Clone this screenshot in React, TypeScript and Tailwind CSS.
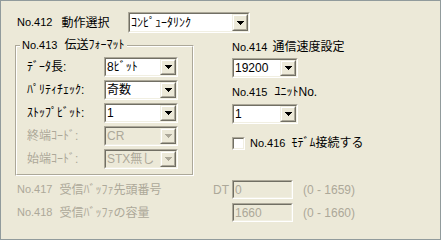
import type { ReactNode } from 'react'

const GREY = 'text-[#aca899]'

function Sunken({ className, children }: { className: string; children: ReactNode }) {
  return (
    <div className={`border border-t-[#aca899] border-l-[#aca899] border-b-white border-r-white ${className}`}>
      <div className="flex h-full border border-t-[#716f64] border-l-[#716f64] border-b-[#f1efe2] border-r-[#f1efe2]">
        {children}
      </div>
    </div>
  )
}

function DropButton({ disabled }: { disabled?: boolean }) {
  return (
    <div className="w-[16px] h-full border border-t-[#f1efe2] border-l-[#f1efe2] border-b-[#716f64] border-r-[#716f64]">
      <div className="flex items-center justify-center h-full bg-[#ece9d8] border border-t-white border-l-white border-b-[#aca899] border-r-[#aca899]">
        <svg width="7" height="4" viewBox="0 0 7 4" shapeRendering="crispEdges" fill={disabled ? '#aca899' : '#000'}>
          <rect x="0" y="0" width="7" height="1" />
          <rect x="1" y="1" width="5" height="1" />
          <rect x="2" y="2" width="3" height="1" />
          <rect x="3" y="3" width="1" height="1" />
        </svg>
      </div>
    </div>
  )
}

function Combo({ value, size, disabled }: { value: string; size: string; disabled?: boolean }) {
  return (
    <Sunken className={size}>
      <div className={`flex flex-1 items-center pl-[1px] ${disabled ? 'bg-[#ece9d8] text-[#aca899]' : 'bg-white text-black'}`}>
        {value}
      </div>
      <DropButton disabled={disabled} />
    </Sunken>
  )
}

// "No.xxx" is drawn a touch smaller so it keeps the narrow width of the dialog font
function Caption({ no, text, className = '' }: { no: string; text: string; className?: string }) {
  return (
    <span className={`flex items-center ${className}`}>
      <span className="text-[11px]">{no}</span>
      <span>{text}</span>
    </span>
  )
}

function FormatRow({ label, value, disabled }: { label: string; value: string; disabled?: boolean }) {
  return (
    <div className="flex items-center h-[20px]">
      <span className={`w-[77px] ${disabled ? GREY : ''}`}>{label}</span>
      <Combo value={value} size="w-[74px] h-[20px]" disabled={disabled} />
    </div>
  )
}

export default function App() {
  return (
    <div className="w-[441px] h-[240px] bg-[#ece9d8] border border-[#919b9c] text-[12px] leading-none text-black font-['Liberation_Sans','Noto_Sans_CJK_JP',sans-serif]">
      {/* 412 */}
      <div className="flex items-center h-[21px] mt-[11px] ml-[16px]">
        <Caption no="No.412" text="動作選択" className="w-[111px] gap-[9px]" />
        <Combo value="ｺﾝﾋﾟｭｰﾀﾘﾝｸ" size="w-[122px] h-[21px]" />
      </div>

      <div className="flex mt-[6px] ml-[14px]">
        {/* 413 group */}
        <div className="relative mt-[6px] w-[179px] h-[131px] border border-t-[#aca899] border-l-[#aca899] border-b-white border-r-white">
          <div className="h-full border border-t-white border-l-white border-b-[#aca899] border-r-[#aca899]">
            <Caption no="No.413" text="伝送ﾌｫｰﾏｯﾄ" className="absolute -top-[7px] left-[4px] px-[2px] gap-[7px] bg-[#ece9d8]" />
            <div className="flex flex-col gap-[3px] pt-[10px] pl-[10px]">
              <FormatRow label="ﾃﾞｰﾀ長:" value="8ﾋﾞｯﾄ" />
              <FormatRow label="ﾊﾟﾘﾃｨﾁｪｯｸ:" value="奇数" />
              <FormatRow label="ｽﾄｯﾌﾟﾋﾞｯﾄ:" value="1" />
              <FormatRow label="終端ｺｰﾄﾞ:" value="CR" disabled />
              <FormatRow label="始端ｺｰﾄﾞ:" value="STX無し" disabled />
            </div>
          </div>
        </div>

        {/* 414 - 416 */}
        <div className="flex flex-col ml-[38px]">
          <Caption no="No.414" text="通信速度設定" className="h-[16px] gap-[5px]" />
          <div className="mt-[3px]">
            <Combo value="19200" size="w-[66px] h-[20px]" />
          </div>
          <Caption no="No.415" text="ﾕﾆｯﾄNo." className="h-[16px] mt-[6px] gap-[7px]" />
          <div className="mt-[4px]">
            <Combo value="1" size="w-[66px] h-[20px]" />
          </div>
          <label className="flex items-center gap-[5px] h-[16px] mt-[11px]">
            <Sunken className="w-[13px] h-[13px]">
              <div className="flex-1 bg-white" />
            </Sunken>
            <Caption no="No.416" text="ﾓﾃﾞﾑ接続する" className="gap-[6px]" />
          </label>
        </div>
      </div>

      {/* 417 / 418 */}
      <div className={`flex items-center h-[19px] mt-[4px] ml-[16px] ${GREY}`}>
        <Caption no="No.417" text="受信ﾊﾞｯﾌｧ先頭番号" className="w-[196px] gap-[7px]" />
        <span className="w-[19px]">DT</span>
        <Sunken className="w-[61px] h-[19px]">
          <div className="flex flex-1 items-center pl-[1px]">0</div>
        </Sunken>
        <span className="ml-[10px]">(0 - 1659)</span>
      </div>
      <div className={`flex items-center h-[19px] mt-[4px] ml-[16px] ${GREY}`}>
        <Caption no="No.418" text="受信ﾊﾞｯﾌｧの容量" className="w-[215px] gap-[7px]" />
        <Sunken className="w-[61px] h-[19px]">
          <div className="flex flex-1 items-center pl-[1px]">1660</div>
        </Sunken>
        <span className="ml-[10px]">(0 - 1660)</span>
      </div>
    </div>
  )
}
